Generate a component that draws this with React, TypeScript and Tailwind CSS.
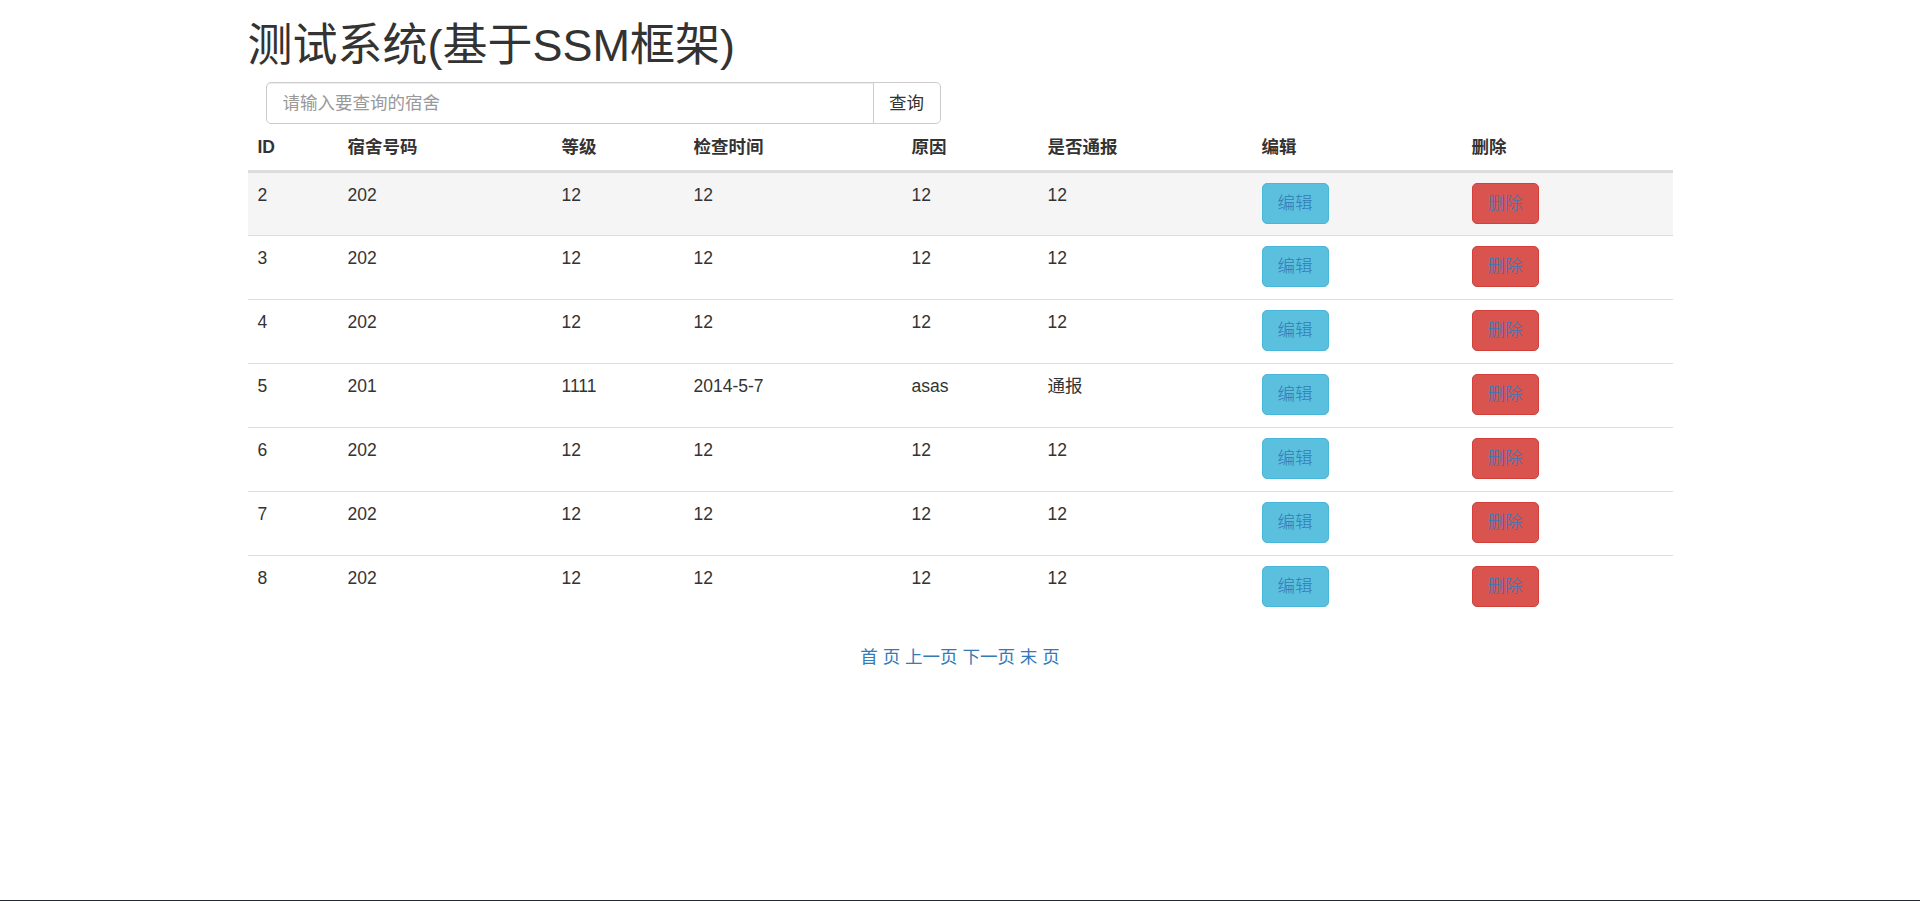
import React from "react";

type Record = {
    id: number;
    room: string;
    level: string;
    time: string;
    reason: string;
    notice: string;
};

const RECORDS: Record[] = [
    { id: 2, room: "202", level: "12", time: "12", reason: "12", notice: "12" },
    { id: 3, room: "202", level: "12", time: "12", reason: "12", notice: "12" },
    { id: 4, room: "202", level: "12", time: "12", reason: "12", notice: "12" },
    { id: 5, room: "201", level: "1111", time: "2014-5-7", reason: "asas", notice: "通报" },
    { id: 6, room: "202", level: "12", time: "12", reason: "12", notice: "12" },
    { id: 7, room: "202", level: "12", time: "12", reason: "12", notice: "12" },
    { id: 8, room: "202", level: "12", time: "12", reason: "12", notice: "12" },
];

const COLUMNS = [
    { name: "ID", width: "w-[90px]" },
    { name: "宿舍号码", width: "w-[214px]" },
    { name: "等级", width: "w-[132px]" },
    { name: "检查时间", width: "w-[218px]" },
    { name: "原因", width: "w-[136px]" },
    { name: "是否通报", width: "w-[214px]" },
    { name: "编辑", width: "w-[210px]" },
    { name: "删除", width: "w-[211px]" },
];

const App: React.FC = () => {
    return (
        <div
            className="min-h-[901px] flex flex-col bg-white text-[#333] text-[17.5px] leading-[25px]"
            style={{ fontFamily: '"Liberation Sans", "Noto Sans CJK SC", sans-serif' }}
        >
            <div className="w-[1425px] mx-auto">
                {/* Title */}
                <h1 className="mt-[21px] mb-[11px] text-[45px] leading-[50px] font-normal text-[#333]">
                    测试系统(基于SSM框架)
                </h1>

                {/* Search */}
                <form className="flex ml-[18px] h-[42px]" onSubmit={(e) => e.preventDefault()}>
                    <input
                        type="text"
                        placeholder="请输入要查询的宿舍"
                        className="w-[608px] h-full px-[16px] border border-[#ccc] rounded-l-[5px] text-[17.5px] text-[#555] placeholder:text-[#999] outline-none shadow-[inset_0_1px_1px_rgba(0,0,0,0.075)]"
                    />
                    <button
                        type="submit"
                        className="w-[68px] h-full -ml-px border border-[#ccc] rounded-r-[5px] bg-white text-[17.5px] text-[#333]"
                    >
                        查询
                    </button>
                </form>

                {/* Table */}
                <table className="w-full table-fixed border-collapse">
                    <thead>
                        <tr className="border-b-[3px] border-[#ddd]">
                            {COLUMNS.map((col) => (
                                <th
                                    key={col.name}
                                    className={`${col.width} px-[10px] pt-[11px] pb-[10px] text-left font-bold align-bottom`}
                                >
                                    {col.name}
                                </th>
                            ))}
                        </tr>
                    </thead>
                    <tbody>
                        {RECORDS.map((r, index) => (
                            <tr
                                key={r.id}
                                className={
                                    index === 0
                                        ? "h-[64px] bg-[#f5f5f5]"
                                        : "h-[64px] border-t border-[#ddd]"
                                }
                            >
                                <td className="px-[10px] pt-[10px] align-top">{r.id}</td>
                                <td className="px-[10px] pt-[10px] align-top">{r.room}</td>
                                <td className="px-[10px] pt-[10px] align-top">{r.level}</td>
                                <td className="px-[10px] pt-[10px] align-top">{r.time}</td>
                                <td className="px-[10px] pt-[10px] align-top">{r.reason}</td>
                                <td className="px-[10px] pt-[10px] align-top">{r.notice}</td>
                                <td className="px-[10px] pt-[10px] align-top">
                                    <button className="w-[67px] h-[41px] border border-[#46b8da] bg-[#5bc0de] rounded-[5px] text-[#337ab7] text-[17.5px] font-light">
                                        编辑
                                    </button>
                                </td>
                                <td className="px-[10px] pt-[10px] align-top">
                                    <button className="w-[67px] h-[41px] border border-[#d43f3a] bg-[#d9534f] rounded-[5px] text-[#337ab7] text-[17.5px] font-light">
                                        删除
                                    </button>
                                </td>
                            </tr>
                        ))}
                    </tbody>
                </table>

                {/* Pagination */}
                <div className="mt-[25px] text-center text-[#337ab7]">
                    <a href="#">首 页</a> <a href="#">上一页</a> <a href="#">下一页</a>{" "}
                    <a href="#">末 页</a>
                </div>
            </div>

            <div className="mt-auto h-px bg-[#1f2a35]" />
        </div>
    );
};

export default App;
